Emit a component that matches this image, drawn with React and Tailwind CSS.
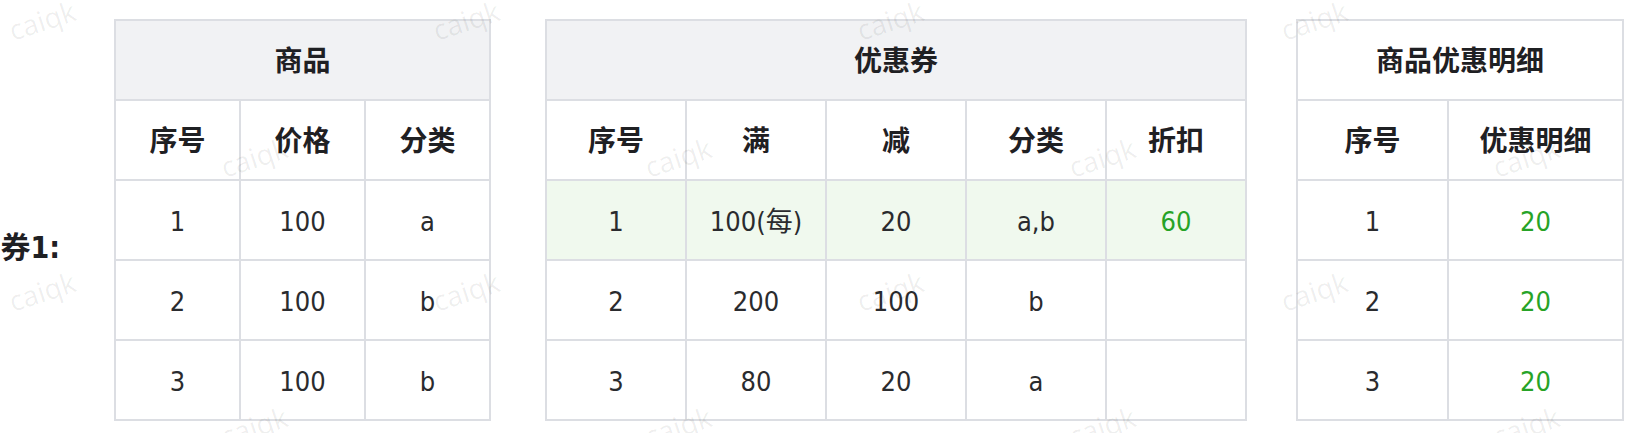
import React from "react";

const font = "font-['DejaVu_Sans_Condensed','Liberation_Sans','Noto_Sans_CJK_SC',sans-serif]";

const marks = [
  [42, 20], [466, 20], [890, 20], [1314, 20],
  [254, 157], [678, 157], [1102, 157], [1526, 157],
  [42, 291], [466, 291], [890, 291], [1314, 291],
  [254, 426], [678, 426], [1102, 426], [1526, 426],
];

function Cell({ children, className = "" }) {
  return (
    <div className={`h-[78px] pt-[4px] flex items-center justify-center ${className}`}>
      {children}
    </div>
  );
}

function HeadCell({ children, className = "bg-white" }) {
  return (
    <Cell className={`${className} text-[28px] font-bold text-[#1f2023]`}>{children}</Cell>
  );
}

export default function App() {
  const goods = [
    ["1", "100", "a"],
    ["2", "100", "b"],
    ["3", "100", "b"],
  ];
  const coupons = [
    ["1", "100(每)", "20", "a,b", "60"],
    ["2", "200", "100", "b", ""],
    ["3", "80", "20", "a", ""],
  ];
  const detail = [
    ["1", "20"],
    ["2", "20"],
    ["3", "20"],
  ];

  return (
    <div className={`relative w-[1636px] h-[433px] overflow-hidden bg-white ${font} text-[#2a2b2e]`}>
      <div className="flex items-start pt-[19px]">
        <div className="w-[60px] shrink-0 mt-[209px] flex justify-end">
          <span className="whitespace-nowrap text-[30px] leading-[40px] font-bold text-[#1f2023]">
            优惠券1:
          </span>
        </div>

        {/* 商品 */}
        <div className="ml-[54px] shrink-0 grid grid-cols-[123px_123px_123px] gap-[2px] p-[2px] bg-[#dcdee3]">
          <HeadCell className="col-span-3 bg-[#f1f2f4]">商品</HeadCell>
          <HeadCell>序号</HeadCell>
          <HeadCell>价格</HeadCell>
          <HeadCell>分类</HeadCell>
          {goods.map((r) =>
            r.map((v, i) => (
              <Cell key={r[0] + "-" + i} className="bg-white text-[27px]">{v}</Cell>
            ))
          )}
        </div>

        {/* 优惠券 */}
        <div className="ml-[54px] shrink-0 grid grid-cols-[138px_138px_138px_138px_138px] gap-[2px] p-[2px] bg-[#dcdee3]">
          <HeadCell className="col-span-5 bg-[#f1f2f4]">优惠券</HeadCell>
          <HeadCell>序号</HeadCell>
          <HeadCell>满</HeadCell>
          <HeadCell>减</HeadCell>
          <HeadCell>分类</HeadCell>
          <HeadCell>折扣</HeadCell>
          {coupons.map((r, ri) =>
            r.map((v, i) => (
              <Cell
                key={ri + "-" + i}
                className={`text-[27px] ${ri === 0 ? "bg-[#f0f9ee]" : "bg-white"} ${i === 4 ? "text-[#27a327]" : ""}`}
              >
                {v}
              </Cell>
            ))
          )}
        </div>

        {/* 商品优惠明细 */}
        <div className="ml-[49px] shrink-0 grid grid-cols-[149px_173px] gap-[2px] p-[2px] bg-[#dcdee3]">
          <HeadCell className="col-span-2 bg-white">商品优惠明细</HeadCell>
          <HeadCell>序号</HeadCell>
          <HeadCell>优惠明细</HeadCell>
          {detail.map((r) => (
            <React.Fragment key={r[0]}>
              <Cell className="bg-white text-[27px]">{r[0]}</Cell>
              <Cell className="bg-white text-[27px] text-[#27a327]">{r[1]}</Cell>
            </React.Fragment>
          ))}
        </div>
      </div>

      {/* watermark */}
      {marks.map(([x, y], i) => (
        <span
          key={i}
          className="absolute -translate-x-1/2 -translate-y-1/2 -rotate-[18deg] pointer-events-none select-none font-['Open_Sans',sans-serif] text-[28px] leading-none text-[rgba(0,0,0,0.07)]"
          style={{ left: x, top: y }}
        >
          caiqk
        </span>
      ))}
    </div>
  );
}
